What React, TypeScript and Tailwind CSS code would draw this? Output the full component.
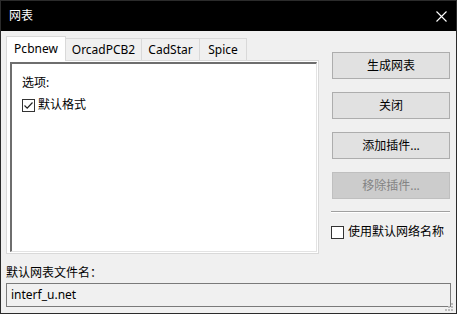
import React from 'react'

const tabs = [
    { label: 'Pcbnew', w: 'w-[60px]' },
    { label: 'OrcadPCB2', w: 'w-[76px]' },
    { label: 'CadStar', w: 'w-[58px]' },
    { label: 'Spice', w: 'w-[47px]' },
]

const buttons = [
    { label: '生成网表', disabled: false },
    { label: '关闭', disabled: false },
    { label: '添加插件...', disabled: false },
    { label: '移除插件...', disabled: true },
]

// small win32 style checkbox
const CheckBox = ({ checked }: { checked?: boolean }) => (
    <div className="w-[13px] h-[13px] border border-[#333333] bg-white flex items-center justify-center shrink-0">
        {checked && (
            <svg width="11" height="11" viewBox="0 0 11 11">
                <path d="M1.5 5.5 L4.2 8.2 L9.5 2.5" fill="none" stroke="#222" strokeWidth="1.2" />
            </svg>
        )}
    </div>
)

const App = () => {
    return (
        <div className="w-[457px] h-[314px] border border-[#2b2b2b] bg-[#f0f0f0] flex flex-col relative font-['Noto_Sans','Noto_Sans_CJK_SC',sans-serif] text-[12px] text-black leading-[16px] overflow-hidden">
            {/* title bar */}
            <div className="h-[30px] bg-black flex items-center justify-between shrink-0">
                <span className="text-white pl-[8px] text-[12px]">网表</span>
                <svg width="11" height="11" viewBox="0 0 11 11" className="mr-[9px]">
                    <path d="M0.5 0.5 L10.5 10.5 M10.5 0.5 L0.5 10.5" stroke="#fff" strokeWidth="1.1" />
                </svg>
            </div>

            <div className="flex flex-col px-[5px] pt-[5px]">
                <div className="flex">
                    {/* left: tab control */}
                    <div className="w-[313px] flex flex-col">
                        <div className="flex h-[24px] items-end">
                            {tabs.map((t, i) =>
                                i === 0 ? (
                                    <div key={t.label} className={`${t.w} h-[25px] -mb-px bg-white border border-b-0 border-[#d9d9d9] flex items-center justify-center z-10`}>
                                        {t.label}
                                    </div>
                                ) : (
                                    <div key={t.label} className={`${t.w} h-[22px] bg-[#f0f0f0] border border-l-0 border-b-0 border-[#d9d9d9] flex items-center justify-center`}>
                                        {t.label}
                                    </div>
                                )
                            )}
                        </div>
                        <div className="h-[194px] border border-[#d9d9d9] bg-white pl-[3px] pr-[1px] pt-[1px] pb-[1px]">
                            <div className="h-full border-l-2 border-t-2 border-[#6e6e6e] border-r border-b border-r-[#e3e3e3] border-b-[#e3e3e3] pl-[10px] pt-[11px]">
                                <div className="h-[16px]">选项:</div>
                                <div className="flex items-center gap-[3px] mt-[6px] h-[16px]">
                                    <CheckBox checked />
                                    <span>默认格式</span>
                                </div>
                            </div>
                        </div>
                    </div>

                    {/* right: buttons */}
                    <div className="ml-[12px] w-[120px] flex flex-col pt-[16px]">
                        {buttons.map((b) => (
                            <div
                                key={b.label}
                                className={
                                    b.disabled
                                        ? 'ml-px w-[118px] h-[27px] mb-[13px] border border-[#bfbfbf] bg-[#cccccc] text-[#838383] flex items-center justify-center'
                                        : 'ml-px w-[118px] h-[27px] mb-[13px] border border-[#adadad] bg-[#e1e1e1] flex items-center justify-center'
                                }
                            >
                                {b.label}
                            </div>
                        ))}
                        <div className="-mt-px w-[119px] h-[2px] border-t border-[#a0a0a0] border-b border-b-white" />
                        <div className="flex items-center gap-[4px] mt-[11px] h-[16px]">
                            <CheckBox />
                            <span>使用默认网络名称</span>
                        </div>
                    </div>
                </div>

                <div className="mt-[11px] h-[16px]">默认网表文件名：</div>
                <div className="mt-[2px] w-[445px] h-[24px] border border-[#7a7a7a] bg-[#f0f0f0] flex items-center pl-[4px]">
                    interf_u.net
                </div>
            </div>

            {/* size grip */}
            <svg width="10" height="10" viewBox="0 0 10 10" className="absolute right-[2px] bottom-[1px]">
                <rect x="7" y="1" width="2" height="2" fill="#bcbcbc" />
                <rect x="4" y="4" width="2" height="2" fill="#bcbcbc" />
                <rect x="7" y="4" width="2" height="2" fill="#bcbcbc" />
                <rect x="1" y="7" width="2" height="2" fill="#bcbcbc" />
                <rect x="4" y="7" width="2" height="2" fill="#bcbcbc" />
                <rect x="7" y="7" width="2" height="2" fill="#bcbcbc" />
            </svg>
        </div>
    )
}

export default App
